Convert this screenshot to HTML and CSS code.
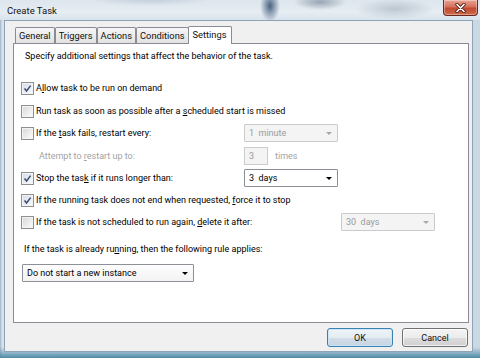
FILE: index.html
```html
<!DOCTYPE html>
<html>
<head>
<meta charset="utf-8">
<title>Create Task</title>
<link rel="stylesheet" href="styles.css">
</head>
<body>
<div class="window">
  <div class="titlebar">
    <span class="title">Create Task</span>
    <div class="close">
      <svg width="13" height="10" viewBox="0 0 13 10"><path d="M3 1.5 L10 8.5 M10 1.5 L3 8.5" stroke="#4a1a10" stroke-width="3.2" stroke-linecap="round"/><path d="M3 1.5 L10 8.5 M10 1.5 L3 8.5" stroke="#ffffff" stroke-width="1.7" stroke-linecap="round"/></svg>
    </div>
  </div>
  <div class="client">
    <div class="tabs">
      <div class="tab">General</div>
      <div class="tab">Triggers</div>
      <div class="tab">Actions</div>
      <div class="tab">Conditions</div>
      <div class="tab active">Settings</div>
    </div>
    <div class="panel">
      <p class="desc">Specify additional settings that affect the behavior of the task.</p>
      <div class="rows">
        <div class="row">
          <div class="left"><span class="cb checked"><svg width="9" height="9" viewBox="0 0 9 9"><path d="M1.5 4.5 L3.6 7 L7.6 1.6" fill="none" stroke="#3b4f73" stroke-width="1.5"/></svg></span><span class="lbl">A<u>l</u>low task to be run on demand</span></div>
        </div>
        <div class="row gap">
          <div class="left"><span class="cb"></span><span class="lbl">Run task as soon as possible after a <u>s</u>cheduled start is missed</span></div>
        </div>
        <div class="row">
          <div class="left"><span class="cb"></span><span class="lbl">If the <u>t</u>ask fails, restart every:</span></div>
          <div class="combo disabled"><span class="val">1&nbsp; minute</span><span class="arrow"></span></div>
        </div>
        <div class="row gap">
          <div class="left indent"><span class="lbl dim">Attempt to <u>r</u>estart up to:</span></div>
          <div class="textbox disabled">3</div><span class="lbl dim times">times</span>
        </div>
        <div class="row">
          <div class="left"><span class="cb checked"><svg width="9" height="9" viewBox="0 0 9 9"><path d="M1.5 4.5 L3.6 7 L7.6 1.6" fill="none" stroke="#3b4f73" stroke-width="1.5"/></svg></span><span class="lbl">Stop the tas<u>k</u> if it runs longer than:</span></div>
          <div class="combo"><span class="val">3&nbsp; days</span><span class="arrow"></span></div>
        </div>
        <div class="row">
          <div class="left"><span class="cb checked"><svg width="9" height="9" viewBox="0 0 9 9"><path d="M1.5 4.5 L3.6 7 L7.6 1.6" fill="none" stroke="#3b4f73" stroke-width="1.5"/></svg></span><span class="lbl">If the running task does not end when requested, <u>f</u>orce it to stop</span></div>
        </div>
        <div class="row">
          <div class="left long"><span class="cb"></span><span class="lbl">If the task is not scheduled to run again, <u>d</u>elete it after:</span></div>
          <div class="combo disabled"><span class="val">30&nbsp; days</span><span class="arrow"></span></div>
        </div>
      </div>
      <p class="rule">If the task is already ru<u>n</u>ning, then the following rule applies:</p>
      <div class="combo wide"><span class="val">Do not start a new instance</span><span class="arrow"></span></div>
    </div>
    <div class="buttons">
      <button class="btn default">OK</button>
      <button class="btn">Cancel</button>
    </div>
  </div>
</div>
</body>
</html>
```

FILE: styles.css
```css
* { box-sizing: border-box; }
html, body { margin: 0; padding: 0; }
body {
  width: 480px;
  height: 358px;
  overflow: hidden;
  font-family: Roboto, "Liberation Sans", sans-serif;
  font-size: 9px;
  color: #000;
  background: #b9cbdb;
}
.window {
  width: 480px;
  height: 358px;
  display: flex;
  flex-direction: column;
  background:
    linear-gradient(to bottom, rgba(255,255,255,0) 97%, #4d8aa6 100%),
    linear-gradient(to right, #9fb3c6 0px, #d6e1eb 2px, #cad8e4 100%);
}
.titlebar {
  height: 20px;
  flex: none;
  display: flex;
  align-items: center;
  position: relative;
  background:
    radial-gradient(ellipse 10px 16px at 270px 6px, rgba(35,65,100,0.8), rgba(35,65,100,0)),
    radial-gradient(ellipse 26px 8px at 320px 2px, rgba(80,100,120,0.5), rgba(80,100,120,0)),
    radial-gradient(ellipse 40px 10px at 395px 9px, rgba(110,130,150,0.35), rgba(110,130,150,0)),
    radial-gradient(ellipse 60px 6px at 150px 0px, rgba(120,140,160,0.25), rgba(120,140,160,0)),
    linear-gradient(to bottom, #dde5ed 0%, #e6edf3 60%, #d9e3ec 100%);
}
.title {
  margin-left: 7px;
  margin-top: 1px;
  font-size: 9.5px;
  color: #111;
}
.close {
  position: absolute;
  top: 0;
  right: 2px;
  width: 35px;
  height: 16px;
  border: 1px solid #6a2a20;
  border-top: none;
  border-radius: 0 0 4px 4px;
  background: linear-gradient(to bottom, #e8a493 0%, #d7705a 45%, #c14a32 55%, #d06a4a 100%);
  display: flex;
  align-items: center;
  justify-content: center;
  box-shadow: inset 0 0 0 1px rgba(255,255,255,0.35);
}
.client {
  flex: 1;
  margin: 0 7px 6px 4px;
  border: 1px solid #8fa3b6;
  background: #f0f0f0;
  display: flex;
  flex-direction: column;
}
.tabs {
  display: flex;
  align-items: flex-end;
  height: 18px;
  margin-top: 5px;
  margin-bottom: -1px;
  padding-left: 10px;
  position: relative;
  z-index: 2;
}
.tab {
  height: 16px;
  margin-bottom: 1px;
  padding: 0 3px;
  border: 1px solid #898c95;
  border-bottom: none;
  border-radius: 2px 2px 0 0;
  background: linear-gradient(to bottom, #f6f6f6, #e2e2e2);
  line-height: 15px;
  font-size: 9.3px;
  color: #111;
  margin-right: 0;
}
.tab.active {
  height: 18px;
  margin-bottom: 0;
  margin-left: -1px;
  padding: 0 4px;
  background: #fff;
  line-height: 15px;
}
.panel {
  margin: 0 3px 0 8px;
  height: 280px;
  border: 1px solid #898c95;
  background: #fff;
  padding: 5px 0 0 7px;
  position: relative;
  z-index: 1;
}
.desc {
  margin: 0 0 0 4px;
  line-height: 14px;
  height: 14px;
}
.rows {
  margin-top: 14px;
  display: flex;
  flex-direction: column;
}
.row {
  height: 22px;
  display: flex;
  align-items: center;
}
.row.gap { margin-top: 1px; }
.left {
  width: 223px;
  display: flex;
  align-items: center;
  flex: none;
  white-space: nowrap;
}
.left.long { width: 320px; }
.left.indent { padding-left: 18px; }
.cb {
  width: 13px;
  height: 13px;
  flex: none;
  border: 1px solid #8e8f8f;
  background: linear-gradient(135deg, #d6d6d6 0%, #f2f2f2 70%, #fbfbfb 100%);
  box-shadow: inset 0 0 0 1px #f4f4f4;
  display: flex;
  align-items: center;
  justify-content: center;
  margin-right: 2px;
}
.cb.checked {
  background: linear-gradient(135deg, #d5dbe6 0%, #eef1f6 70%, #fafbfd 100%);
}
.lbl { white-space: nowrap; }
.dim { color: #a3a3a3; }
.times { margin-left: 7px; }
.combo {
  width: 94px;
  height: 18px;
  flex: none;
  border: 1px solid #8a8f96;
  border-radius: 1px;
  background: #fff;
  display: flex;
  align-items: center;
  padding-left: 4px;
  padding-right: 5px;
}
.combo .val { flex: 1; white-space: nowrap; }
.combo .arrow {
  width: 0;
  height: 0;
  border-left: 3px solid transparent;
  border-right: 3px solid transparent;
  border-top: 3px solid #000;
}
.combo.disabled {
  background: #f4f4f4;
  border-color: #c9cbce;
  color: #9a9a9a;
}
.combo.disabled .arrow { border-top-color: #a7a7a7; }
.textbox {
  width: 24px;
  height: 18px;
  flex: none;
  border: 1px solid #c9cbce;
  background: #f4f4f4;
  color: #9a9a9a;
  padding-left: 4px;
  line-height: 16px;
}
.rule {
  margin: 9px 0 0 3px;
  line-height: 14px;
  height: 14px;
}
.combo.wide {
  margin: 8px 0 0 1px;
  width: 172px;
  border-color: #8d9197;
  background: linear-gradient(to bottom, #fdfdfd, #f3f3f3);
}
.buttons {
  display: flex;
  justify-content: flex-end;
  gap: 9px;
  margin-top: 5px;
  padding-right: 4px;
}
.btn {
  width: 66px;
  height: 19px;
  font-family: Roboto, "Liberation Sans", sans-serif;
  font-size: 9px;
  color: #111;
  border: 1px solid #707070;
  border-radius: 3px;
  padding: 0;
  background: linear-gradient(to bottom, #f4f4f4 0%, #ececec 50%, #dddddd 51%, #d0d0d0 100%);
  box-shadow: inset 0 0 0 1px rgba(255,255,255,0.7);
}
.btn.default {
  border-color: #3c7fb1;
  background: linear-gradient(to bottom, #eef4f8 0%, #e4ecf2 50%, #d3dee8 51%, #c6d5e2 100%);
  box-shadow: inset 0 0 0 1px rgba(200,230,250,0.9);
}
```
